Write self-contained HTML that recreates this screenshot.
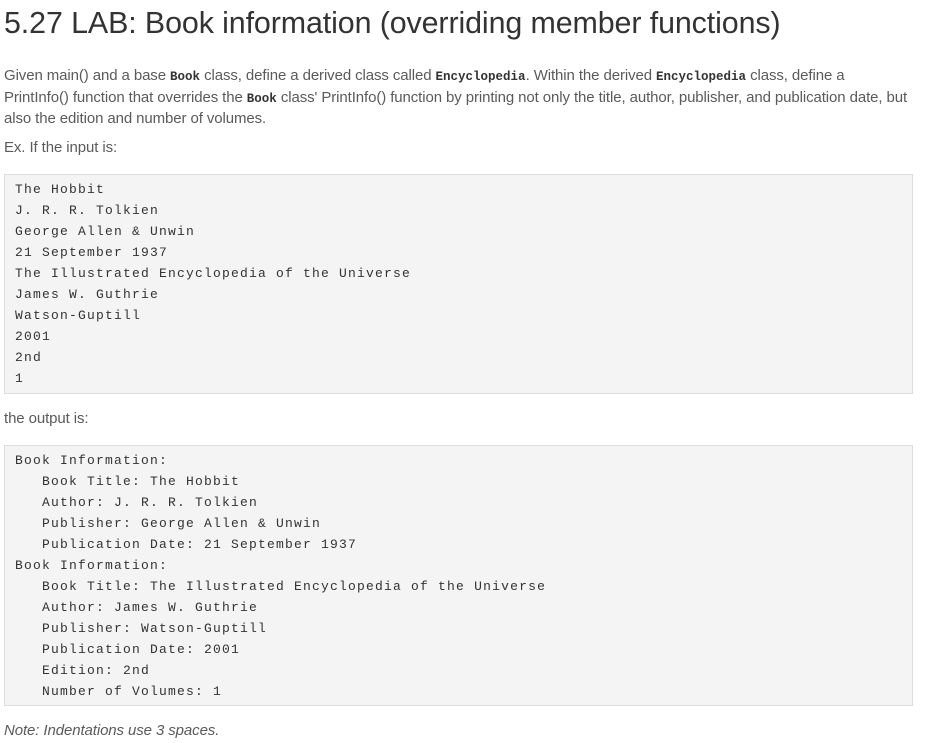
<!DOCTYPE html>
<html><head><meta charset="utf-8"><style>
body{margin:0;background:#fff;font-family:"Liberation Sans",sans-serif;color:#5a5a5a;}
h1{position:absolute;left:4px;top:6px;margin:0;font-weight:normal;font-size:30.4px;color:#333;letter-spacing:-0.1px;white-space:nowrap}
.p{position:absolute;left:4px;font-size:15px;line-height:21.5px;white-space:nowrap;letter-spacing:-0.1px}
code{font-family:"Liberation Mono",monospace;font-size:12.5px;color:#333;font-weight:bold;letter-spacing:0;line-height:0}
.box{position:absolute;left:4px;width:907px;background:#f4f4f4;border:1px solid #ddd;}
pre{margin:0;padding:4px 10px;font-family:"Liberation Mono",monospace;font-size:13px;letter-spacing:1.2px;line-height:21px;color:#333}
</style></head><body>
<h1>5.27 LAB: Book information (overriding member functions)</h1>
<div class="p" style="top:65px">Given main() and a base <code>Book</code> class, define a derived class called <code>Encyclopedia</code>. Within the derived <code>Encyclopedia</code> class, define a<br>PrintInfo() function that overrides the <code>Book</code> class' PrintInfo() function by printing not only the title, author, publisher, and publication date, but<br>also the edition and number of volumes.</div>
<div class="p" style="top:137px">Ex. If the input is:</div>
<div class="box" style="top:174px;height:218px"><pre>The Hobbit
J. R. R. Tolkien
George Allen &amp; Unwin
21 September 1937
The Illustrated Encyclopedia of the Universe
James W. Guthrie
Watson-Guptill
2001
2nd
1</pre></div>
<div class="p" style="top:408px">the output is:</div>
<div class="box" style="top:445px;height:259px"><pre>Book Information:
   Book Title: The Hobbit
   Author: J. R. R. Tolkien
   Publisher: George Allen &amp; Unwin
   Publication Date: 21 September 1937
Book Information:
   Book Title: The Illustrated Encyclopedia of the Universe
   Author: James W. Guthrie
   Publisher: Watson-Guptill
   Publication Date: 2001
   Edition: 2nd
   Number of Volumes: 1</pre></div>
<div class="p" style="top:720px;font-style:italic">Note: Indentations use 3 spaces.</div>
</body></html>
